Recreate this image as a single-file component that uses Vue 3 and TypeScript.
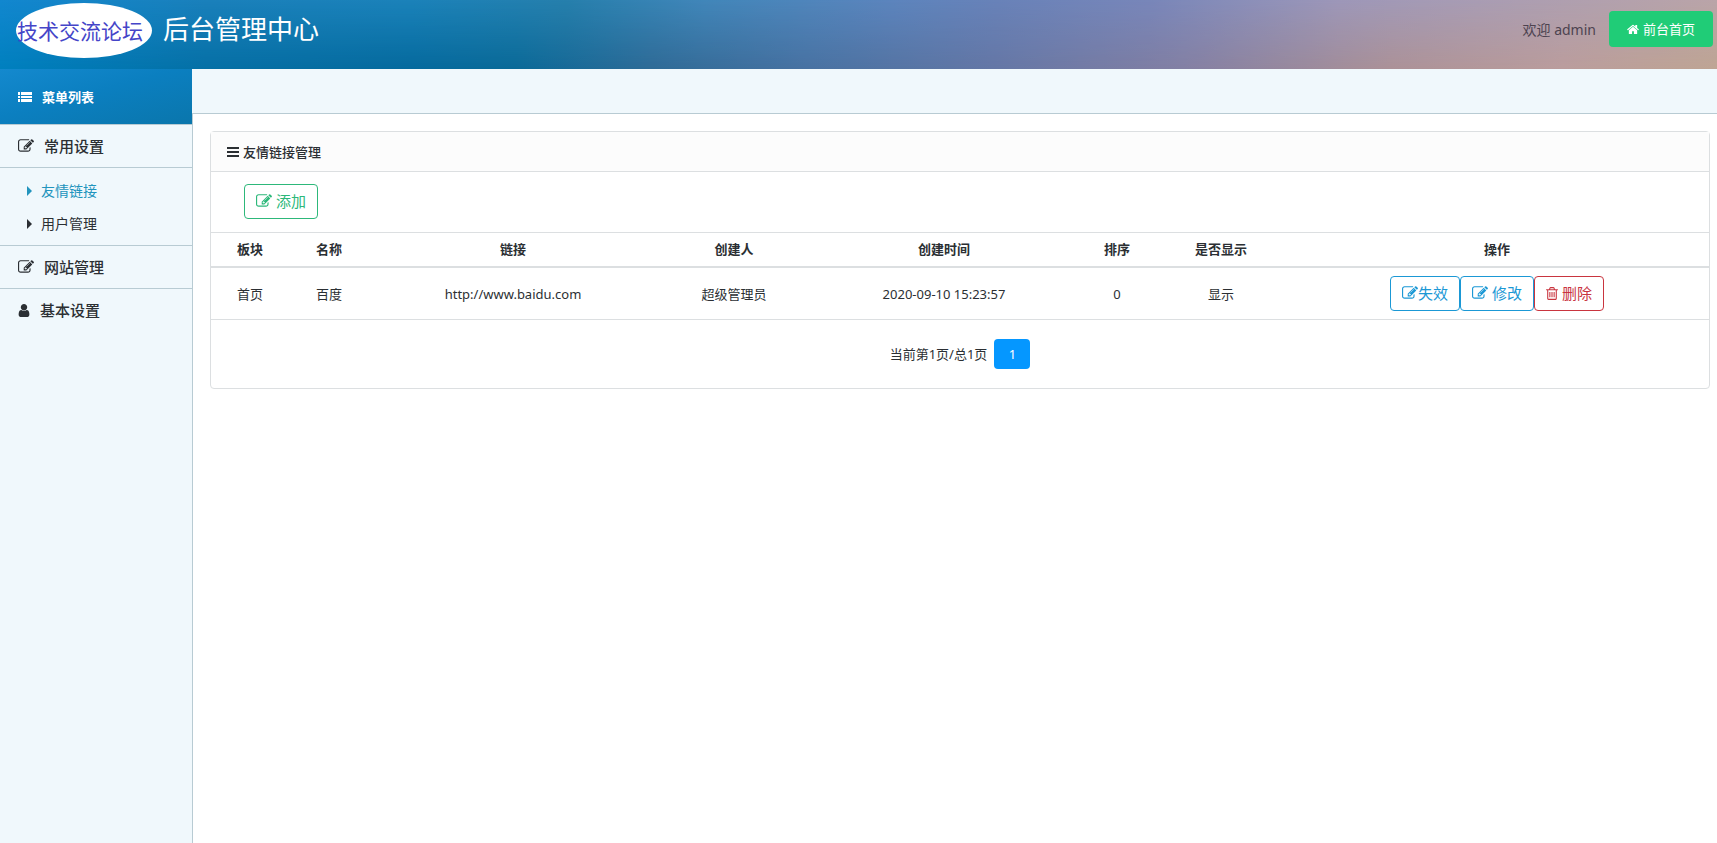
<script setup lang="ts">
interface Link {
  board: string
  name: string
  url: string
  creator: string
  created: string
  order: number
  state: string
}

const columns: { title: string; width: string }[] = [
  { title: '板块', width: 'w-board' },
  { title: '名称', width: 'w-name' },
  { title: '链接', width: 'w-url' },
  { title: '创建人', width: 'w-creator' },
  { title: '创建时间', width: 'w-created' },
  { title: '排序', width: 'w-order' },
  { title: '是否显示', width: 'w-state' },
  { title: '操作', width: 'w-actions' },
]

const links: Link[] = [
  {
    board: '首页',
    name: '百度',
    url: 'http://www.baidu.com',
    creator: '超级管理员',
    created: '2020-09-10 15:23:57',
    order: 0,
    state: '显示',
  },
]
</script>

<template>
  <svg class="sprite" aria-hidden="true">
    <symbol id="i-edit" viewBox="0 0 1792 1792">
      <path d="M888 1184l116-116-152-152-116 116v56h96v96h56zm440-720q-16-16-33 1l-350 350q-17 17-1 33t33-1l350-350q17-17 1-33zm80 594v190q0 119-84.5 203.5t-203.5 84.5h-832q-119 0-203.5-84.5t-84.5-203.5v-832q0-119 84.5-203.5t203.5-84.5h832q63 0 117 25 15 7 18 23 3 17-9 29l-49 49q-14 14-32 8-23-6-45-6h-832q-66 0-113 47t-47 113v832q0 66 47 113t113 47h832q66 0 113-47t47-113v-126q0-13 9-22l64-64q15-15 35-7t20 29zm-96-738l288 288-672 672h-288v-288zm444 132l-92 92-288-288 92-92q28-28 68-28t68 28l152 152q28 28 28 68t-28 68z" />
    </symbol>
    <symbol id="i-home" viewBox="64 0 1664 1792">
      <path d="M1472 992v480q0 26-19 45t-45 19h-384v-384h-256v384h-384q-26 0-45-19t-19-45v-480q0-1 .5-3t.5-3l575-474 575 474q1 2 1 6zm223-69l-62 74q-8 9-21 11h-3q-13 0-21-7l-692-577-692 577q-12 8-24 7-13-2-21-11l-62-74q-8-10-7-23.5t11-21.5l719-599q32-26 76-26t76 26l244 204v-195q0-14 9-23t23-9h192q14 0 23 9t9 23v408l219 182q10 8 11 21.5t-7 23.5z" />
    </symbol>
    <symbol id="i-trash" viewBox="192 0 1408 1792">
      <path d="M704 736v576q0 14-9 23t-23 9h-64q-14 0-23-9t-9-23v-576q0-14 9-23t23-9h64q14 0 23 9t9 23zm256 0v576q0 14-9 23t-23 9h-64q-14 0-23-9t-9-23v-576q0-14 9-23t23-9h64q14 0 23 9t9 23zm256 0v576q0 14-9 23t-23 9h-64q-14 0-23-9t-9-23v-576q0-14 9-23t23-9h64q14 0 23 9t9 23zm128 724v-948h-896v948q0 22 7 40.5t14.5 27 10.5 8.5h832q3 0 10.5-8.5t14.5-27 7-40.5zm-672-1076h448l-48-117q-7-9-17-11h-317q-10 2-17 11zm928 32v64q0 14-9 23t-23 9h-96v948q0 83-47 143.5t-113 60.5h-832q-66 0-113-58.5t-47-141.5v-952h-96q-14 0-23-9t-9-23v-64q0-14 9-23t23-9h309l70-167q15-37 54-63t79-26h320q40 0 79 26t54 63l70 167h309q14 0 23 9t9 23z" />
    </symbol>
    <symbol id="i-user" viewBox="256 0 1280 1792">
      <path d="M1536 1399q0 109-62.5 187t-150.5 78h-854q-88 0-150.5-78t-62.5-187q0-85 8.5-160.5t31.5-152 58.5-131 94-89 134.5-34.5q131 128 313 128t313-128q76 0 134.5 34.5t94 89 58.5 131 31.5 152 8.5 160.5zm-256-887q0 159-112.5 271.5t-271.5 112.5-271.5-112.5-112.5-271.5 112.5-271.5 271.5-112.5 271.5 112.5 112.5 271.5z" />
    </symbol>
  </svg>

  <div class="page">
    <header class="top">
      <div class="logo">技术交流论坛</div>
      <h1>后台管理中心</h1>
      <div class="account">
        <span class="welcome">欢迎 admin</span>
        <a class="home" href="#">
          <svg class="i i-home"><use href="#i-home" /></svg>
          <span>前台首页</span>
        </a>
      </div>
    </header>

    <div class="body">
      <nav class="side" aria-label="菜单列表">
        <div class="side-title">
          <svg class="i i-list" viewBox="0 0 14 10">
            <path d="M0 0h2v3H0zM3 0h11v3H3zM0 4h2v2H0zM3 4h11v2H3zM0 7h2v3H0zM3 7h11v3H3z" />
          </svg>
          <span>菜单列表</span>
        </div>
        <a class="group wide" href="#">
          <svg class="i i-edit"><use href="#i-edit" /></svg>常用设置
        </a>
        <ul class="sub">
          <li><a class="active" href="#">友情链接</a></li>
          <li><a href="#">用户管理</a></li>
        </ul>
        <a class="group wide" href="#">
          <svg class="i i-edit"><use href="#i-edit" /></svg>网站管理
        </a>
        <a class="group last" href="#">
          <svg class="i i-user"><use href="#i-user" /></svg>基本设置
        </a>
      </nav>

      <div class="content">
        <div class="strip"></div>
        <main class="card">
          <h2>
            <svg class="i i-bars" viewBox="0 0 12 10"><path d="M0 0h12v2H0zM0 4h12v2H0zM0 8h12v2H0z" /></svg>
            <span>友情链接管理</span>
          </h2>
          <div class="tools">
            <button class="btn green" type="button">
              <svg class="i i-edit"><use href="#i-edit" /></svg>添加
            </button>
          </div>
          <table>
            <colgroup>
              <col v-for="c in columns" :key="c.title" :class="c.width" />
            </colgroup>
            <thead>
              <tr>
                <th v-for="c in columns" :key="c.title" scope="col">{{ c.title }}</th>
              </tr>
            </thead>
            <tbody>
              <tr v-for="l in links" :key="l.url">
                <td>{{ l.board }}</td>
                <td>{{ l.name }}</td>
                <td>{{ l.url }}</td>
                <td>{{ l.creator }}</td>
                <td>{{ l.created }}</td>
                <td>{{ l.order }}</td>
                <td>{{ l.state }}</td>
                <td>
                  <div class="actions">
                    <button class="btn blue tight" type="button">
                      <svg class="i i-edit"><use href="#i-edit" /></svg>失效
                    </button>
                    <button class="btn blue" type="button">
                      <svg class="i i-edit"><use href="#i-edit" /></svg>修改
                    </button>
                    <button class="btn red" type="button">
                      <svg class="i i-trash"><use href="#i-trash" /></svg>删除
                    </button>
                  </div>
                </td>
              </tr>
            </tbody>
          </table>
          <div class="pager">
            <span>当前第1页/总1页</span>
            <button class="page-no" type="button" aria-current="page">1</button>
          </div>
        </main>
      </div>
    </div>
  </div>
</template>

<style>
body {
  margin: 0;
  background: #fff;
}
</style>

<style scoped>
.page {
  display: flex;
  flex-direction: column;
  min-height: 100vh;
  font: 13px/20px "Noto Sans", "Noto Sans CJK SC", sans-serif;
  color: #2b2f33;
}

.page * {
  box-sizing: border-box;
}

.sprite {
  display: none;
}

.i {
  flex: none;
  fill: currentColor;
}

a {
  color: inherit;
  text-decoration: none;
}

button {
  font: inherit;
  cursor: pointer;
}

/* header */
.top {
  display: flex;
  align-items: flex-start;
  height: 69px;
  padding: 0 4px 0 16px;
  position: relative;
  z-index: 0;
  background: linear-gradient(90deg, #0080bf 0%, #0570a6 12%, #056a9e 24%, #0a6a98 30%, #2f6b97 38%, #4872a2 47%, #6577a6 58%, #8480a4 69%, #ac9298 81%, #bb9d9d 91%, #bfa594 100%);
}

.top::before {
  content: "";
  position: absolute;
  inset: 0;
  z-index: -1;
  background: linear-gradient(90deg, #1187cf 0%, #1a80bb 12%, #1b82b9 24%, #267fac 33%, #4186b9 41%, #5c84bd 52%, #6882b8 58%, #7886b9 67%, #9d97b8 78%, #a89cb3 86%, #b9a4a8 100%);
  mask-image: linear-gradient(#000, transparent);
}

.logo {
  display: flex;
  align-items: center;
  justify-content: center;
  width: 136px;
  height: 55px;
  margin-top: 3px;
  padding-right: 8px;
  border-radius: 50%;
  background: #fff;
  color: #4545c8;
  font-size: 21px;
  font-weight: 400;
  white-space: nowrap;
}

h1 {
  margin: 11px 0 0 11px;
  color: #fff;
  font-size: 26px;
  font-weight: 400;
  line-height: 36px;
}

.account {
  display: flex;
  align-items: center;
  gap: 13px;
  margin: 11px 0 0 auto;
}

.welcome {
  padding-top: 2px;
  color: #4d4350;
  font-size: 14px;
}

.home {
  display: flex;
  align-items: center;
  gap: 4px;
  height: 36px;
  padding: 0 18px;
  border-radius: 4px;
  background: #20cc77;
  color: #fff;
}

.i-home {
  width: 12px;
  height: 13px;
}

/* layout */
.body {
  display: flex;
  flex: 1;
}

.side {
  width: 193px;
  border-right: 1px solid #b8cbd3;
  background: #f0f8fc;
}

.side-title {
  display: flex;
  align-items: center;
  gap: 10px;
  height: 55px;
  padding: 0 18px;
  background: linear-gradient(165deg, #1489ce, #0b7fc0 45%, #0a76ac);
  color: #fff;
  font-weight: 700;
}

.i-list {
  width: 14px;
  height: 10px;
}

.group {
  display: flex;
  align-items: center;
  gap: 10px;
  padding: 11px 18px;
  border-top: 1px solid #b8cbd3;
  font-size: 15px;
  font-weight: 500;
}

.wide {
  border-bottom: 1px solid #b8cbd3;
}

.last {
  border-top: 0;
}

.i-edit {
  width: 16px;
  height: 16px;
}

.i-user {
  width: 12px;
  height: 15px;
}

.sub {
  margin: 0;
  padding: 6px 0 5px;
  list-style: none;
  font-size: 14px;
}

.sub a {
  display: flex;
  align-items: center;
  gap: 9px;
  height: 33px;
  padding-left: 27px;
}

.sub a::before {
  content: "";
  border: solid transparent;
  border-width: 5px 0 5px 5px;
  border-left-color: currentColor;
}

.sub .active {
  color: #2294bd;
}

.content {
  flex: 1;
  min-width: 0;
}

.strip {
  height: 45px;
  margin-left: -1px;
  border-bottom: 1px solid #b8cbd3;
  background: #f0f8fc;
}

/* card */
.card {
  margin: 17px 7px 0 17px;
  border: 1px solid #dcdfe1;
  border-radius: 4px;
}

h2 {
  display: flex;
  align-items: center;
  gap: 4px;
  height: 40px;
  margin: 0;
  padding: 0 16px;
  border-bottom: 1px solid #dcdfe1;
  background: #fcfcfc;
  font-size: 13px;
  font-weight: 500;
}

.i-bars {
  width: 12px;
  height: 10px;
}

.tools {
  display: flex;
  padding: 12px 33px 13px;
}

.btn {
  display: flex;
  align-items: center;
  gap: 4px;
  height: 35px;
  padding: 0 11px 1px;
  border: 1px solid currentColor;
  border-radius: 4px;
  background: #fff;
  font-size: 15px;
  white-space: nowrap;
}

.tight {
  gap: 0;
}

.green {
  color: #2db87a;
}

.blue {
  color: #1b98d5;
}

.red {
  color: #c9353f;
}

.i-trash {
  width: 12px;
  height: 15px;
}

table {
  width: 100%;
  table-layout: fixed;
  border-collapse: separate;
  border-spacing: 0;
  text-align: center;
}

.w-board { width: 78px; }
.w-name { width: 80px; }
.w-url { width: 288px; }
.w-creator { width: 154px; }
.w-created { width: 266px; }
.w-order { width: 80px; }
.w-state { width: 128px; }
.w-actions { width: 424px; }

th {
  padding: 6px 0 7px;
  border-top: 1px solid #dcdfe1;
  border-bottom: 2px solid #dcdfe1;
  font-weight: 700;
}

td {
  padding: 8px 0;
  border-bottom: 1px solid #dcdfe1;
}

.actions {
  display: flex;
  justify-content: center;
}

.pager {
  display: flex;
  align-items: center;
  justify-content: center;
  gap: 7px;
  padding: 19px 0;
}

.page-no {
  width: 36px;
  height: 30px;
  padding: 0;
  border: 0;
  border-radius: 4px;
  background: #0597ff;
  color: #fff;
}
</style>
